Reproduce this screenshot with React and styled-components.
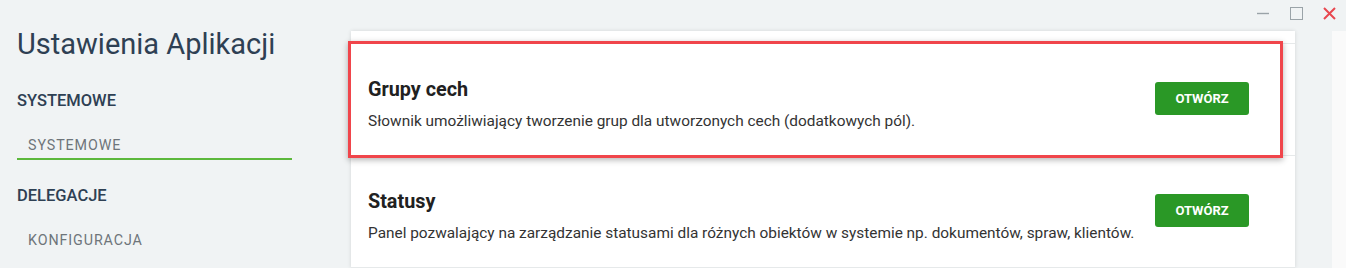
import React from 'react'
import styled, { createGlobalStyle } from 'styled-components'

const GlobalStyle = createGlobalStyle`
  html, body {
    margin: 0;
    padding: 0;
    background: #f0f3f4;
    font-family: Roboto, "Noto Sans", sans-serif;
  }
  * { box-sizing: border-box; }
`

const sections = [
  { title: 'SYSTEMOWE', items: [{ label: 'SYSTEMOWE', active: true }] },
  { title: 'DELEGACJE', items: [{ label: 'KONFIGURACJA' }] },
]

const rows = [
  {
    title: 'Grupy cech',
    desc: 'Słownik umożliwiający tworzenie grup dla utworzonych cech (dodatkowych pól).',
    highlight: true,
  },
  {
    title: 'Statusy',
    desc: 'Panel pozwalający na zarządzanie statusami dla różnych obiektów w systemie np. dokumentów, spraw, klientów.',
  },
]

export default function App() {
  return (
    <>
      <GlobalStyle />
      <Page>
        <Sidebar>
          <AppTitle>Ustawienia Aplikacji</AppTitle>
          {sections.map(s => (
            <Section key={s.title}>
              <SectionTitle>{s.title}</SectionTitle>
              {s.items.map(i => (
                <NavItem key={i.label} active={i.active}>{i.label}</NavItem>
              ))}
            </Section>
          ))}
        </Sidebar>
        <Main>
          <TitleBar>
            <WinButton aria-label="Minimalizuj">
              <svg width="12" height="12" viewBox="0 0 12 12">
                <line x1="0" y1="6.5" x2="12" y2="6.5" stroke="#9aa3a8" strokeWidth="1.4" />
              </svg>
            </WinButton>
            <WinButton aria-label="Maksymalizuj">
              <svg width="13" height="13" viewBox="0 0 13 13">
                <rect x="0.5" y="0.5" width="12" height="12" fill="none" stroke="#9aa3a8" strokeWidth="1" />
              </svg>
            </WinButton>
            <WinButton aria-label="Zamknij">
              <svg width="13" height="13" viewBox="0 0 13 13">
                <path d="M1 1 L12 12 M12 1 L1 12" stroke="#e8474f" strokeWidth="2" />
              </svg>
            </WinButton>
          </TitleBar>
          <Content>
            <Card>
              <TopRow />
              {rows.map(r => (
                <Row key={r.title}>
                  {r.highlight && <Highlight />}
                  <RowText>
                    <RowTitle>{r.title}</RowTitle>
                    <RowDesc>{r.desc}</RowDesc>
                  </RowText>
                  <OpenButton>OTWÓRZ</OpenButton>
                </Row>
              ))}
            </Card>
            <Scrollbar />
          </Content>
        </Main>
      </Page>
    </>
  )
}

const Page = styled.div`
  display: flex;
  height: 268px;
  overflow: hidden;
`

const Sidebar = styled.div`
  width: 351px;
  flex-shrink: 0;
  padding: 24px 0 0 17px;
`

const AppTitle = styled.div`
  font-size: 29px;
  line-height: 40px;
  color: #2e4053;
  font-weight: 400;
  margin-bottom: 27px;
`

const Section = styled.div`
  margin-bottom: 26px;
`

const SectionTitle = styled.div`
  font-size: 16.5px;
  font-weight: 500;
  color: #2e4053;
  line-height: 20px;
  margin-bottom: 24px;
`

const NavItem = styled.div`
  width: 275px;
  padding: 0 11px 3px;
  font-size: 14.3px;
  line-height: 20px;
  font-weight: 400;
  letter-spacing: 0.9px;
  color: #6e757a;
  border-bottom: 2px solid ${p => (p.active ? '#5cb83c' : 'transparent')};
`

const Main = styled.div`
  flex: 1;
  display: flex;
  flex-direction: column;
`

const TitleBar = styled.div`
  height: 32px;
  display: flex;
  justify-content: flex-end;
  align-items: flex-start;
  padding: 6px 10px 0 0;
  gap: 19px;
`

const WinButton = styled.div`
  width: 14px;
  height: 14px;
  display: flex;
  align-items: center;
  justify-content: center;
`

const Content = styled.div`
  flex: 1;
  display: flex;
  justify-content: space-between;
`

const Card = styled.div`
  width: 944px;
  background: #fff;
  box-shadow: 0 0 4px rgba(0, 0, 0, 0.12);
`

const TopRow = styled.div`
  height: 13px;
  border-bottom: 1px solid #e6e9ea;
`

const Row = styled.div`
  position: relative;
  display: flex;
  align-items: flex-start;
  min-height: 112px;
  padding: 33px 46px 0 17px;
  border-bottom: 1px solid #e6e9ea;
`

const Highlight = styled.div`
  position: absolute;
  left: -3px;
  top: -3px;
  width: 935px;
  height: 117px;
  border: 3px solid #f0454b;
  box-shadow: 0 2px 6px rgba(0, 0, 0, 0.3);
  pointer-events: none;
`

const RowText = styled.div`
  flex: 1;
`

const RowTitle = styled.div`
  font-size: 19.8px;
  line-height: 26px;
  font-weight: 700;
  color: #212121;
`

const RowDesc = styled.div`
  margin-top: 7px;
  font-size: 15.4px;
  line-height: 22px;
  color: #333;
`

const OpenButton = styled.button`
  margin-top: 5px;
  width: 94px;
  height: 33px;
  border: none;
  border-radius: 3px;
  background: #2a9826;
  color: #fff;
  font-family: Roboto, sans-serif;
  font-size: 13px;
  font-weight: 700;
`

const Scrollbar = styled.div`
  width: 14px;
  background: #fafafa;
`
